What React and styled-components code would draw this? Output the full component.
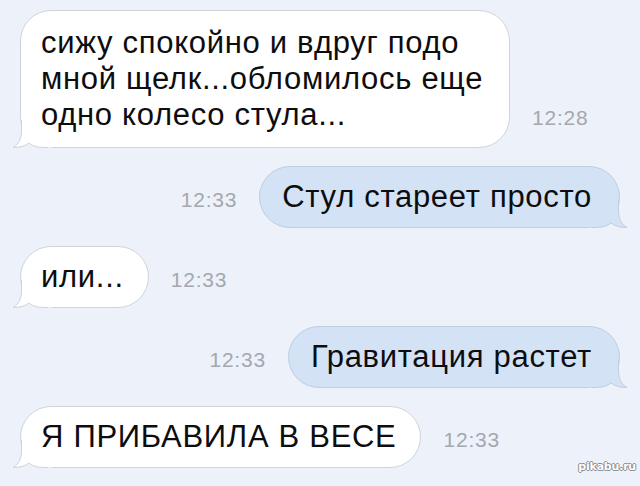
import React from 'react';
import styled, { createGlobalStyle } from 'styled-components';

const GlobalStyle = createGlobalStyle`
  html, body {
    margin: 0;
    padding: 0;
    background: #ecf1fa;
  }
`;

const Page = styled.div`
  position: relative;
  width: 640px;
  height: 486px;
  box-sizing: border-box;
  padding-top: 10px;
  display: flex;
  flex-direction: column;
  gap: 18px;
  background: #ecf1fa;
  font-family: 'Liberation Sans', Arial, Helvetica, sans-serif;
  overflow: hidden;
`;

const Row = styled.div`
  display: flex;
  align-items: last baseline;
  justify-content: flex-start;
  flex-direction: ${(p) => (p.$out ? 'row-reverse' : 'row')};
  gap: 22px;
  padding: ${(p) => (p.$out ? '0 20px 0 0' : '0 0 0 20px')};
`;

const Bubble = styled.div`
  position: relative;
  box-sizing: border-box;
  width: ${(p) => (p.$w ? `${p.$w}px` : 'auto')};
  padding: ${(p) => (p.$multi ? '14px' : '12px')} ${(p) => (p.$out ? '27px' : '24px')}
    ${(p) => (p.$multi ? '14px' : '12px')} ${(p) => (p.$out ? '22px' : '20px')};
  border-radius: 31px;
  background: ${(p) => (p.$out ? '#d4e2f6' : '#ffffff')};
  border: 1px solid ${(p) => (p.$out ? '#bfcde2' : '#cfd4db')};
  color: #0d0d0f;
  font-size: 31px;
  letter-spacing: 0.7px;
  line-height: 36px;
  white-space: nowrap;
`;

const Text = styled.span`
  position: relative;
`;

const TailSvg = styled.svg`
  position: absolute;
  bottom: -1px;
  ${(p) => (p.$out ? 'right: -9px; transform: scaleX(-1);' : 'left: -9px;')}
  width: 40px;
  height: 28px;
  overflow: visible;
`;

const Time = styled.span`
  font-size: 21px;
  letter-spacing: 0.8px;
  line-height: 36px;
  color: #a4a8ae;
  white-space: nowrap;
`;

const Watermark = styled.div`
  position: absolute;
  right: 4px;
  bottom: 13px;
  font-family: 'DejaVu Sans', sans-serif;
  font-size: 11px;
  font-weight: bold;
  color: #ffffff;
  letter-spacing: -0.2px;
  text-shadow: -1px 0 #8a8d91, 1px 0 #8a8d91, 0 -1px #8a8d91, 0 1px #8a8d91;
`;

const Tail = ({ out }) => {
  const fill = out ? '#d4e2f6' : '#ffffff';
  const stroke = out ? '#bfcde2' : '#cfd4db';
  const edge =
    'M 9.5 0 L 9.5 10 C 9.5 19, 7 24, 1 27.5 C 8 27.5, 13 26, 17 23 C 21 26.5, 26 27.5, 36 27.5';
  return (
    <TailSvg $out={out} viewBox="0 0 40 28">
      <path d={`${edge} L 40 27.5 L 40 0 Z`} fill={fill} />
      <path d={edge} fill="none" stroke={stroke} strokeWidth="1" />
    </TailSvg>
  );
};

const messages = [
  {
    out: false,
    w: 490,
    lines: ['сижу спокойно и вдруг подо', 'мной щелк...обломилось еще', 'одно колесо стула...'],
    time: '12:28',
  },
  { out: true, lines: ['Стул стареет просто'], time: '12:33' },
  { out: false, lines: ['или...'], time: '12:33' },
  { out: true, lines: ['Гравитация растет'], time: '12:33' },
  { out: false, lines: ['Я ПРИБАВИЛА В ВЕСЕ'], time: '12:33' },
];

const Message = ({ out, w, lines, time }) => (
  <Row $out={out}>
    <Bubble $out={out} $w={w} $multi={lines.length > 1}>
      <Tail out={out} />
      <Text>
        {lines.map((line, i) => (
          <React.Fragment key={i}>
            {i > 0 && <br />}
            {line}
          </React.Fragment>
        ))}
      </Text>
    </Bubble>
    <Time>{time}</Time>
  </Row>
);

export default function App() {
  return (
    <>
      <GlobalStyle />
      <Page>
        {messages.map((m, i) => (
          <Message key={i} {...m} />
        ))}
        <Watermark>pikabu.ru</Watermark>
      </Page>
    </>
  );
}
